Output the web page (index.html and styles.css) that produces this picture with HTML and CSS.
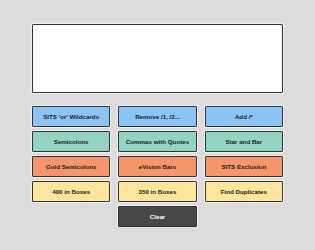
FILE: index.html
```html
<!DOCTYPE html>
<html lang="en">
<head>
    <meta charset="UTF-8">
    <meta name="viewport" content="width=device-width, initial-scale=1.0">
    <title>Code Formatter</title>
    <link rel="stylesheet" href="styles.css">
</head>
<body>

    <div class="main-container">
        <textarea id="input-box" class="input-box"></textarea>

        <div class="button-grid">
            <button class="btn blue">SITS 'or' Wildcards</button>
            <button class="btn blue">Remove /1, /2...</button>
            <button class="btn blue">Add /*</button>

            <button class="btn green">Semicolons</button>
            <button class="btn green">Commas with Quotes</button>
            <button class="btn green">Star and Bar</button>

            <button class="btn orange">Gold Semicolons</button>
            <button class="btn orange">eVision Bars</button>
            <button class="btn orange">SITS Exclusion</button>

            <button class="btn yellow">400 in Boxes</button>
            <button class="btn yellow">350 in Boxes</button>
            <button class="btn yellow">Find Duplicates</button>

            <button class="btn dark clear-btn" onclick="document.getElementById('input-box').value = ''">Clear</button>
        </div>
    </div>

</body>
</html>
```

FILE: styles.css
```css
body {
    font-family: "Liberation Sans", Arial, sans-serif;
    background-color: #dcdcdc;
    margin: 0;
}

.main-container {
    width: 251px;
    margin: 24px auto 0;
}

.input-box {
    display: block;
    box-sizing: border-box;
    width: 100%;
    height: 69px;
    margin: 0;
    border: 1px solid #333;
    border-radius: 1px;
    background-color: #fff;
    box-shadow: 0 0 0 1px #f0f0f0;
    resize: none;
}

.button-grid {
    display: grid;
    grid-template-columns: repeat(3, 1fr);
    column-gap: 8px;
    row-gap: 4px;
    margin-top: 13px;
}

.btn {
    box-sizing: border-box;
    height: 21px;
    padding: 0;
    border: 1px solid #333;
    border-radius: 1px;
    box-shadow: 0 0 0 1px #f2f2f2;
    font-family: "Liberation Sans", Arial, sans-serif;
    font-size: 6.2px;
    font-weight: bold;
    color: #1a1a1a;
    cursor: pointer;
}

.blue {
    background-color: #8cc3f6;
}

.green {
    background-color: #93d3c2;
}

.orange {
    background-color: #f6956a;
}

.yellow {
    background-color: #fde59b;
}

.dark {
    background-color: #474747;
    color: #fff;
}

.clear-btn {
    grid-column: 2;
}
```
